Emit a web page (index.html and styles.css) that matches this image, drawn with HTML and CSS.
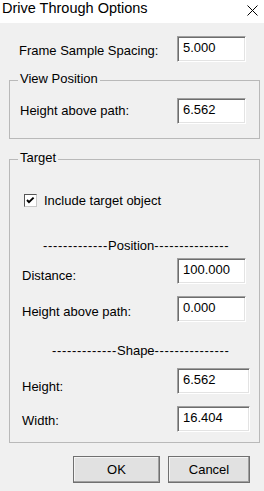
FILE: index.html
```html
<!DOCTYPE html>
<html>
<head>
<meta charset="utf-8">
<link rel="stylesheet" href="styles.css">
</head>
<body>
<div class="window">
  <div class="titlebar">
    <span class="title">Drive Through Options</span>
    <svg class="close" width="11" height="11" viewBox="0 0 11 11"><path d="M0.5 0.5 L10.5 10.5 M10.5 0.5 L0.5 10.5" stroke="#000" stroke-width="1" fill="none"/></svg>
  </div>

  <div class="row row-frame">
    <span class="label off-7">Frame Sample Spacing:</span>
    <span class="edit">5.000</span>
  </div>

  <fieldset class="group group-view">
    <legend>View Position</legend>
    <div class="row row-view">
      <span class="label off-5">Height above path:</span>
      <span class="edit">6.562</span>
    </div>
  </fieldset>

  <fieldset class="group group-target">
    <legend>Target</legend>
    <div class="check">
      <span class="box"><svg width="11" height="11" viewBox="0 0 11 11"><path d="M2 5 L4 7.2 L8.6 2.6" stroke="#000" stroke-width="1.9" fill="none"/></svg></span>
      <span class="check-text">Include target object</span>
    </div>
    <div class="sep sep-position"><span class="dash">-------------</span>Position<span class="dash">---------------</span></div>
    <div class="row row-in row-distance">
      <span class="label off-10">Distance:</span>
      <span class="edit">100.000</span>
    </div>
    <div class="row row-in row-hap">
      <span class="label off-8">Height above path:</span>
      <span class="edit">0.000</span>
    </div>
    <div class="sep sep-shape"><span class="dash">-------------</span>Shape<span class="dash">---------------</span></div>
    <div class="row row-in row-wide row-height">
      <span class="label off-11">Height:</span>
      <span class="edit edit-wide">6.562</span>
    </div>
    <div class="row row-in row-wide row-width">
      <span class="label off-7">Width:</span>
      <span class="edit edit-wide">16.404</span>
    </div>
  </fieldset>

  <div class="buttons">
    <button class="btn btn-ok">OK</button>
    <button class="btn btn-cancel">Cancel</button>
  </div>
</div>
</body>
</html>
```

FILE: styles.css
```css
* { box-sizing: border-box; }

html, body {
  margin: 0;
  padding: 0;
  background: #f0f0f0;
}

body {
  font-family: "Liberation Sans", Arial, sans-serif;
  font-size: 13px;
  line-height: 15px;
  color: #000;
}

.window {
  width: 264px;
  height: 491px;
  background: #f0f0f0;
  overflow: hidden;
}

.titlebar {
  height: 23px;
  background: #fff;
  display: flex;
  justify-content: space-between;
  align-items: flex-start;
}

.title {
  font-size: 14.5px;
  line-height: 17px;
  padding-left: 2px;
  padding-top: 0;
}

.close {
  display: block;
  margin-top: 5px;
  margin-right: 6px;
}

.row {
  display: flex;
  justify-content: space-between;
  align-items: flex-start;
  height: 26px;
}

.label { display: block; }
.off-5 { margin-top: 5px; }
.off-7 { margin-top: 7px; }
.off-8 { margin-top: 8px; }
.off-10 { margin-top: 10px; }
.off-11 { margin-top: 11px; }

.edit {
  display: block;
  width: 69px;
  height: 26px;
  background: #fff;
  border: 1px solid;
  border-color: #a0a0a0 #ffffff #ffffff #a0a0a0;
  box-shadow: inset 1px 1px 0 #6d6d6d, inset -1px -1px 0 #e3e3e3;
  padding: 3px 4px 0 5px;
  line-height: 15px;
  white-space: nowrap;
}

.edit-wide { width: 73px; }

.row-frame {
  margin-top: 13px;
  padding-left: 19px;
  padding-right: 18px;
}

.group {
  margin: 0 4px 0 9px;
  padding: 0;
  border: 1px solid #b9b9b9;
  min-width: 0;
}

.group legend {
  margin-left: 8px;
  padding: 0 2px 3px 2px;
  line-height: 15px;
}

.group-view {
  margin-top: 9px;
  padding-bottom: 14px;
}

.row-view {
  margin-top: 9px;
  padding-left: 10px;
  padding-right: 13px;
}

.group-target {
  margin-top: 11px;
  padding-bottom: 10px;
}

.check {
  display: flex;
  align-items: center;
  height: 15px;
  margin-top: 25px;
  padding-left: 14px;
}

.box {
  display: block;
  width: 13px;
  height: 13px;
  background: #fff;
  border: 1px solid;
  border-color: #555 #c8c8c8 #c8c8c8 #555;
}

.box svg { display: block; }

.check-text { margin-left: 7px; }

.sep {
  height: 15px;
  white-space: nowrap;
}

.dash { letter-spacing: 0.67px; }

.sep-position {
  margin-top: 30px;
  padding-left: 33px;
}

.sep-shape {
  margin-top: 21px;
  padding-left: 42px;
}

.row-in {
  padding-left: 12px;
  padding-right: 13px;
}

.row-wide { padding-right: 9px; }

.row-distance { margin-top: 5px; }
.row-hap { margin-top: 12px; }
.row-height { margin-top: 10px; }
.row-width { margin-top: 12px; }

.buttons {
  display: flex;
  justify-content: flex-end;
  gap: 8px;
  margin-top: 13px;
  padding-right: 14px;
}

.btn {
  height: 27px;
  font-family: "Liberation Sans", Arial, sans-serif;
  font-size: 13px;
  color: #000;
  background: #e1e1e1;
  border: 1px solid #707070;
  box-shadow: inset -1px -1px 0 #a0a0a0, inset 1px 1px 0 #f4f4f4;
  padding: 0;
  margin: 0;
}

.btn-ok { width: 87px; }
.btn-cancel { width: 82px; }
```
